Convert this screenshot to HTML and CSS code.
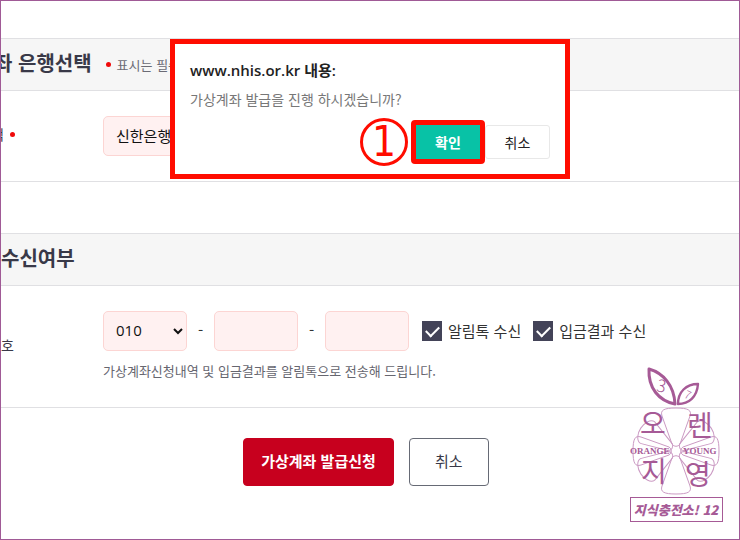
FILE: index.html
```html
<!DOCTYPE html>
<html lang="ko">

<head>
    <meta charset="UTF-8">
    <meta name="viewport" content="width=device-width, initial-scale=1.0">
    <title>가상계좌 발급신청</title>
    <link rel="stylesheet" href="styles.css">
</head>

<body>
    <main class="page">
        <form>
            <section class="section">
                <div class="section-head section-head-cut">
                    <h2>좌 은행선택</h2>
                    <p class="note"><span class="dot"></span>표시는 필수</p>
                </div>
                <div class="row">
                    <label class="row-label row-label-cut" for="bank">택<span class="dot"></span></label>
                    <div class="row-body">
                        <select class="field bank" id="bank">
                            <option>신한은행</option>
                        </select>
                    </div>
                </div>
            </section>

            <section class="section">
                <div class="section-head">
                    <h2>수신여부</h2>
                </div>
                <div class="row">
                    <label class="row-label" for="phone1">호</label>
                    <div class="row-body">
                        <div class="phone">
                            <select class="field" id="phone1">
                                <option>010</option>
                            </select>
                            <span class="dash">-</span>
                            <input class="field" type="text" aria-label="가운데 번호">
                            <span class="dash">-</span>
                            <input class="field" type="text" aria-label="끝 번호">
                            <div class="checks">
                                <label class="check"><input type="checkbox" checked>알림톡 수신</label>
                                <label class="check"><input type="checkbox" checked>입금결과 수신</label>
                            </div>
                        </div>
                        <p class="help">가상계좌신청내역 및 입금결과를 알림톡으로 전송해 드립니다.</p>
                    </div>
                </div>
            </section>

            <div class="actions">
                <button class="btn btn-submit" type="submit">가상계좌 발급신청</button>
                <button class="btn btn-cancel" type="button">취소</button>
            </div>
        </form>

        <div class="dialog" role="dialog" aria-labelledby="dialog-title">
            <h3 id="dialog-title">www.nhis.or.kr 내용:</h3>
            <p>가상계좌 발급을 진행 하시겠습니까?</p>
            <div class="dialog-buttons">
                <span class="step">1</span>
                <button class="confirm" type="button">확인</button>
                <button class="dismiss" type="button">취소</button>
            </div>
        </div>

        <svg class="logo" viewBox="0 0 93 156" width="93" height="156">
            <!-- leaves -->
            <g fill="none" stroke="#a65a96" stroke-width="3" stroke-linejoin="round">
                <path d="M19 2 C33 6 44 18 45 37 C29 34 18 21 19 2Z" />
                <path d="M68 17 C56 17 48 25 48 37 C59 37 67 30 68 17Z" stroke-width="2.4" />
            </g>
            <g class="logo-num">
                <text x="27" y="25" transform="rotate(12 31 19)">3</text>
                <text class="logo-seven" x="55" y="32" transform="rotate(25 58 28)">7</text>
            </g>
            <!-- orange slices -->
            <g fill="none" stroke="#cb9ac3" stroke-width="1">
                <path id="slice" d="M42 77 L32 49 C30 43 34 41 46 41 C58 41 62 43 60 49 L50 77 C48 80 44 80 42 77Z" />
                <path id="side" d="M42 77 L33 50 C33 45 40 42 46 42 C52 42 59 45 59 50 L50 77 C48 80 44 80 42 77Z" transform="rotate(57 46 84)" />
                <use href="#slice" transform="rotate(90 46 84)" />
                <use href="#slice" transform="rotate(180 46 84)" />
                <use href="#slice" transform="rotate(270 46 84)" />
                <use href="#side" transform="rotate(66 46 84)" />
                <use href="#side" transform="rotate(180 46 84)" />
                <use href="#side" transform="rotate(246 46 84)" />
            </g>
            <g class="logo-big">
                <text x="10" y="67">오</text>
                <text x="57" y="69">렌</text>
                <text x="11" y="115">지</text>
                <text x="55" y="118">영</text>
            </g>
            <g class="logo-en">
                <text x="0" y="87">ORANGE</text>
                <text x="53" y="87">YOUNG</text>
            </g>
            <rect x="0.5" y="130.5" width="92" height="24" fill="none" stroke="#a65a96" />
            <text class="logo-sub" x="46" y="148">지식충전소! 12</text>
        </svg>
    </main>
</body>

</html>
```
FILE: styles.css
```css
* {
    box-sizing: border-box;
}

body {
    margin: 0;
    font-family: "Noto Sans CJK KR", sans-serif;
    font-size: 15px;
    color: #333;
    background-color: #fff;
}

h2,
h3,
p {
    margin: 0;
}

button,
input,
select {
    font-family: inherit;
}

.page {
    position: relative;
    min-height: 100vh;
    padding-top: 37px;
    border: 1px solid #a05a96;
    overflow: hidden;
}

.section {
    margin-bottom: 51px;
    border-bottom: 1px solid #e0e0e3;
}

.section + .section {
    margin-bottom: 30px;
}

.section-head {
    display: flex;
    align-items: center;
    gap: 14px;
    height: 53px;
    padding-bottom: 4px;
    border-top: 1px solid #e0e0e3;
    border-bottom: 1px solid #e0e0e3;
    background-color: #f6f6f6;
}

.section-head-cut {
    margin-left: -7px;
}

.section-head h2 {
    font-size: 20px;
    line-height: 28px;
    font-weight: 700;
    color: #393948;
}

.note {
    display: flex;
    align-items: center;
    gap: 6px;
    padding-top: 4px;
    font-size: 13px;
    color: #6b6b75;
}

.dot {
    width: 5px;
    height: 5px;
    border-radius: 50%;
    background-color: #f00a0a;
}

.row {
    display: grid;
    grid-template-columns: 102px 1fr;
    align-items: center;
    padding: 25px 0;
}

.row-label {
    display: flex;
    align-items: center;
    gap: 6px;
    padding-bottom: 4px;
    font-size: 14px;
    color: #393948;
}

.row-label-cut {
    margin-left: -10px;
}

.field {
    width: 84px;
    height: 40px;
    padding: 0 0 2px 8px;
    border: 1px solid #fcd5d3;
    border-radius: 5px;
    background-color: #fff1f1;
    font-size: 15px;
    color: #111;
}

#phone1 {
    font-family: "Open Sans", sans-serif;
}

.bank {
    display: block;
    width: 200px;
}

.phone {
    display: flex;
    align-items: center;
}

.dash {
    width: 27px;
    padding-bottom: 4px;
    text-align: center;
}

.checks {
    display: flex;
    gap: 12px;
    margin-left: 13px;
}

.check {
    display: flex;
    align-items: center;
    gap: 6px;
    line-height: 20px;
    white-space: nowrap;
}

.check input {
    appearance: none;
    display: grid;
    place-items: center;
    width: 20px;
    height: 20px;
    margin: 0;
    background-color: #434358;
}

.check input:checked::before {
    content: "";
    width: 11px;
    height: 6px;
    margin-bottom: 3px;
    border-left: 2px solid #fff;
    border-bottom: 2px solid #fff;
    transform: rotate(-45deg);
}

.help {
    margin-top: 9px;
    padding-bottom: 1px;
    font-size: 13px;
    line-height: 21px;
    color: #66666f;
}

.actions {
    display: flex;
    justify-content: center;
    gap: 15px;
    padding-right: 8px;
}

.btn {
    height: 48px;
    padding: 0 17px 3px;
    border: 1px solid #c7001e;
    border-radius: 4px;
    font-size: 15px;
}

.btn-submit {
    background-color: #c7001e;
    color: #fff;
    font-weight: 700;
}

.btn-cancel {
    width: 80px;
    border-color: #666a75;
    background-color: #fff;
    color: #393948;
}

.dialog {
    position: absolute;
    top: 38px;
    left: 169px;
    width: 400px;
    padding: 15px 15px 10px;
    border: 5px solid #ff0c00;
    background-color: #fff;
}

.dialog h3 {
    font-family: "Open Sans", "Noto Sans CJK KR", sans-serif;
    font-size: 15px;
    line-height: 22px;
    font-weight: 600;
    color: #222;
}

.dialog p {
    margin-top: 8px;
    font-size: 14px;
    line-height: 20px;
    color: #777;
}

.dialog-buttons {
    display: flex;
    justify-content: flex-end;
    align-items: center;
    height: 44px;
    margin-top: 11px;
}

.step {
    width: 48px;
    height: 48px;
    margin-right: 3px;
    border: 3px solid #ff0c00;
    border-radius: 50%;
    font-family: "DejaVu Sans Condensed", "DejaVu Sans", sans-serif;
    font-size: 42px;
    line-height: 42px;
    text-align: center;
    color: #ff0c00;
}

.confirm {
    width: 74px;
    height: 44px;
    border: 5px solid #ff0c00;
    border-radius: 4px;
    background-color: #08c2a6;
    font-size: 14px;
    font-weight: 700;
    color: #fff;
}

.dismiss {
    width: 65px;
    height: 34px;
    border: 1px solid #e8e8e8;
    border-radius: 3px;
    background-color: #fff;
    font-size: 14px;
    color: #222;
}

.logo {
    position: absolute;
    right: 16px;
    bottom: 16px;
    fill: #a65a96;
}

.logo-num {
    font-size: 17px;
    font-weight: 300;
}

.logo-seven {
    font-size: 11px;
}

.logo-big {
    font-size: 28px;
}

.logo-en {
    font-family: "Liberation Serif", serif;
    font-size: 9px;
    font-weight: 700;
}

.logo-sub {
    font-size: 13px;
    font-style: italic;
    font-weight: 900;
    text-anchor: middle;
}
```
